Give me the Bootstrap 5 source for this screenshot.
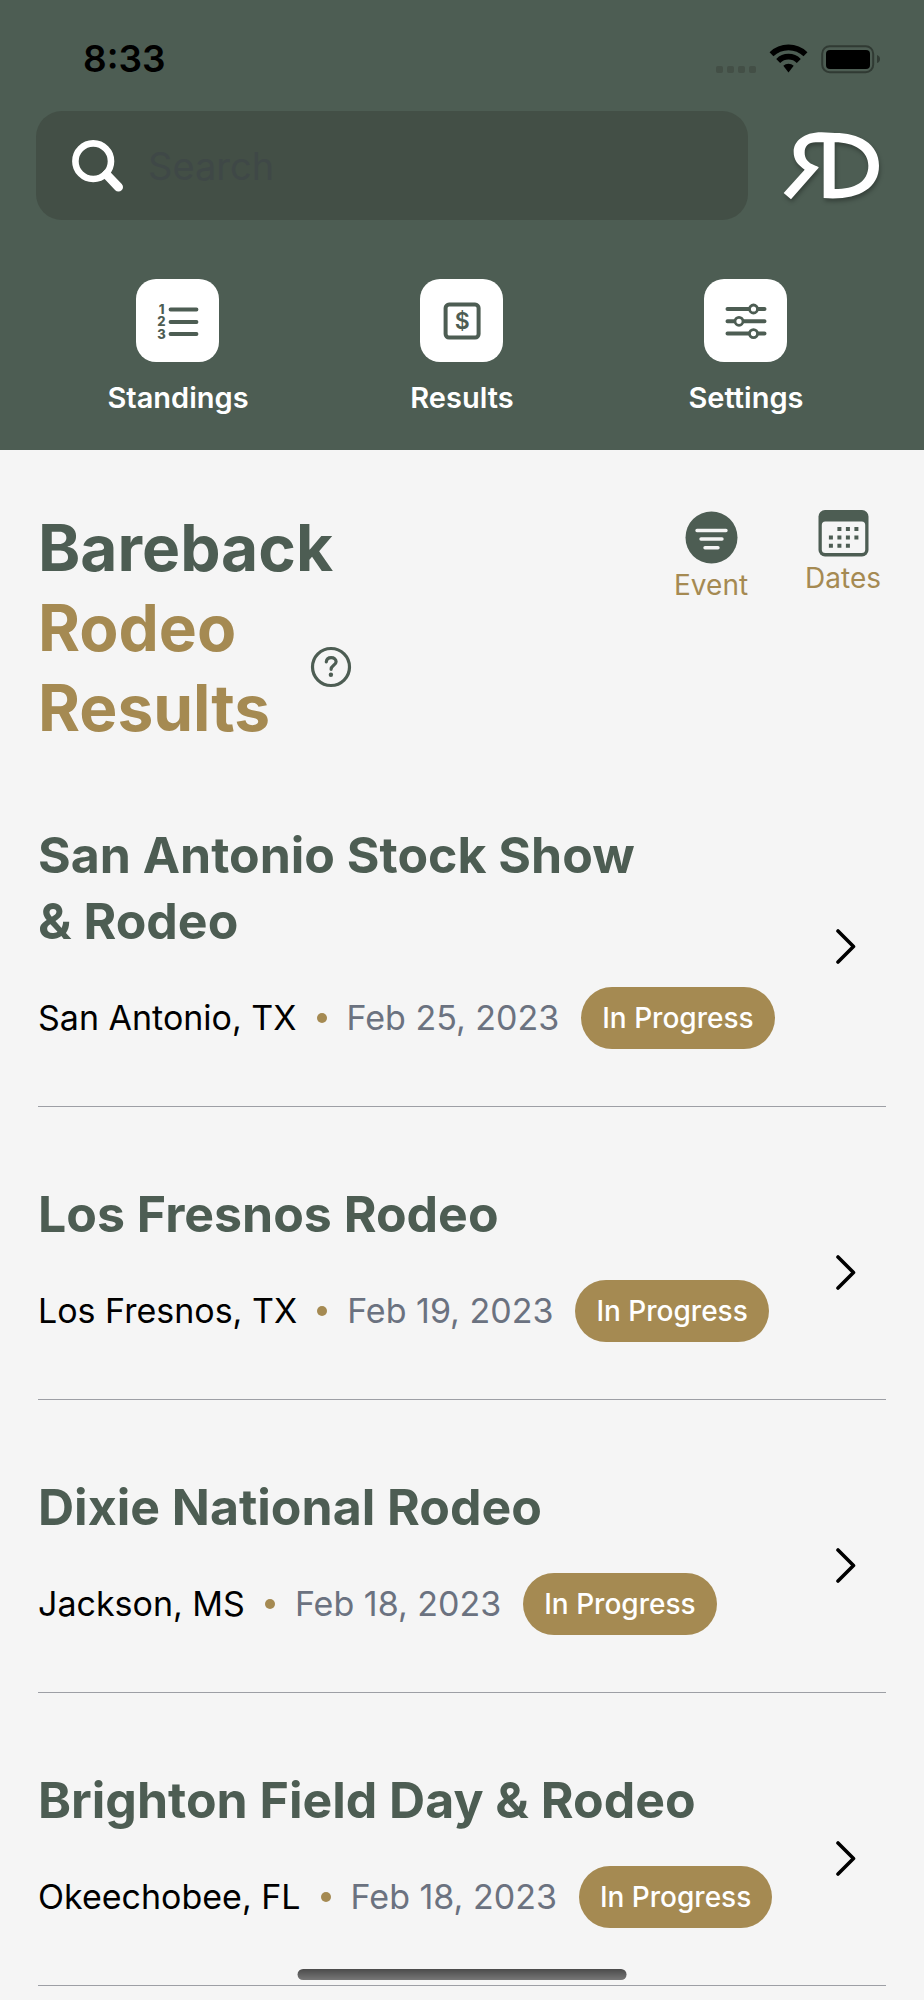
<!DOCTYPE html>
<html lang="en">
<head>
<meta charset="utf-8">
<meta name="viewport" content="width=device-width, initial-scale=1">
<title>Rodeo Results</title>
<link href="https://cdn.jsdelivr.net/npm/bootstrap@5.3.0/dist/css/bootstrap.min.css" rel="stylesheet">
<style>
  :root { --sage: #4d5d53; --gold: #a58a52; --slate: #6b7280; --paper: #f5f5f5; }
  body { background: var(--paper); color: #000; font-family: Inter, "Liberation Sans", sans-serif; }
  svg { display: block; flex: none; }
  a, a:hover { text-decoration: none; }

  .app-top { background: var(--sage); padding-bottom: 32px; }
  .status-row { height: 111px; padding: 6px 44px 0 83px; }
  .clock { font-size: 37px; line-height: 44px; font-weight: 600; color: #000; }
  .search-row { padding: 0 43px 0 36px; gap: 32px; }
  .search-field { height: 109px; border-radius: 26px; background: #434f46; padding: 0 36px; gap: 24px; }
  .search-field input { font-size: 38px; line-height: 48px; color: #fff; }
  .search-field input::placeholder { color: #3f4847; opacity: 1; }
  .logo { filter: drop-shadow(1px 3px 2px rgba(0,0,0,.3)); }

  .shortcuts { padding: 59px 36px 0; }
  .shortcut { color: #fff; font-size: 29px; line-height: 40px; font-weight: 600; }
  .tile { width: 83px; height: 83px; border-radius: 20px; background: #fff; }

  .page-head { padding: 58px 43px 0 38px; }
  .page-head h1 { font-size: 64px; line-height: 80px; font-weight: 700; color: var(--sage); }
  .page-head h1 span { color: var(--gold); }
  .title-block { width: 294px; }
  .help-btn { margin: 0 0 60px -22px; }
  .head-tools { gap: 57px; padding-top: 2px; }
  .tool-btn { font-size: 28px; line-height: 40px; color: var(--gold); }

  .results { padding: 0 38px; }
  .result { padding: 74px 0 57px; border-bottom: 1px solid #9d9fa5; color: #000; }
  .result h2 { font-size: 50px; line-height: 66px; font-weight: 700; color: var(--sage); margin-bottom: 33px; }
  .meta { font-size: 34px; line-height: 62px; gap: 20px; }
  .meta time { color: var(--slate); padding-right: 2px; }
  .bullet { width: 10px; height: 10px; border-radius: 50%; background: var(--gold); }
  .status-pill { background: var(--gold); color: #fff; font-size: 28px; font-weight: 500; border-radius: 31px; padding: 0 21px; }
  .chevron { margin: 20px 29px 0 0; }

  .home-bar { bottom: 20px; width: 35.6%; height: 11px; border-radius: 6px; background: linear-gradient(#4b4b4b, #777); }
</style>
</head>
<body>
<header class="app-top">
  <div class="status-row d-flex align-items-center justify-content-between">
    <span class="clock">8:33</span>
    <svg width="164" height="30" viewBox="0 0 164 30" aria-hidden="true">
      <g fill="#434f46"><rect y="22" width="7" height="7" rx="2"/><rect x="11" y="22" width="7" height="7" rx="2"/><rect x="22" y="22" width="7" height="7" rx="2"/><rect x="33" y="22" width="7" height="7" rx="2"/></g>
      <g fill="none" stroke="#000" stroke-width="5.6"><path d="M55.5 10.2a24.5 24.5 0 0 1 34 0"/><path d="M62.2 16.9a14.6 14.6 0 0 1 20.6 0"/></g>
      <path d="M67.3 21.8a7.6 7.6 0 0 1 10.4 0L72.5 28.5Z"/>
      <rect x="106.2" y="2.2" width="51" height="26" rx="7.5" fill="none" stroke="#303a33" stroke-width="2"/>
      <rect x="110" y="6" width="44" height="19" rx="4"/>
      <path d="M161 11v8q3-1 3-4t-3-4Z" fill="#303a33"/>
    </svg>
  </div>

  <div class="search-row d-flex align-items-center">
    <form class="search-field d-flex align-items-center flex-grow-1" role="search">
      <label for="q">
        <svg width="52" height="52" viewBox="0 0 52 52" fill="none" stroke="#fff" stroke-linecap="round"><circle cx="21.2" cy="21.2" r="17.8" stroke-width="6.6"/><path d="M34.5 34.5l12 12.6" stroke-width="9"/></svg>
      </label>
      <input id="q" type="search" aria-label="Search" class="form-control border-0 bg-transparent shadow-none p-0" placeholder="Search">
    </form>
    <a href="#" aria-label="Home" class="logo"><svg width="101" height="72" viewBox="955 390 303 216"><path fill="#fff" fill-rule="evenodd" d="M1120 399L1080 397C1025 397 996 425 996 455C996 480 1008 493 1029 509L966 579L988 598L1071 503C1071 499 1060 498 1052 493C1038 485 1029 475 1029 458C1029 438 1040 427 1062 427H1086V594C1180 602 1252 570 1252 497C1252 430 1190 399 1120 399ZM1119 427V567C1180 567 1220 545 1220 497C1220 455 1180 427 1119 427Z"/></svg></a>
  </div>

  <nav class="shortcuts">
    <div class="row g-0">
      <div class="col-4 text-center">
        <a href="#" class="shortcut d-inline-flex flex-column align-items-center gap-3">
          <span class="tile d-flex align-items-center justify-content-center"><svg width="42" height="38" viewBox="0 0 42 38"><g stroke="#4d5d53" stroke-width="3.8" stroke-linecap="round"><path d="M13.5 7.5H39.5M13.5 20H39.5M13.5 32H39.5"/></g><g fill="#4d5d53" font-family="Inter" font-weight="800" font-size="13" text-anchor="middle"><text x="4.5" y="11.5">1</text><text x="4.5" y="24">2</text><text x="4.5" y="36.5">3</text></g></svg></span>
          Standings
        </a>
      </div>
      <div class="col-4 text-center">
        <a href="#" class="shortcut d-inline-flex flex-column align-items-center gap-3">
          <span class="tile d-flex align-items-center justify-content-center"><svg width="38" height="38" viewBox="0 0 38 38"><rect x="2.6" y="2.6" width="33" height="33" rx="3.5" fill="none" stroke="#4d5d53" stroke-width="4"/><text x="19.2" y="27" text-anchor="middle" fill="#4d5d53" font-family="Inter" font-size="23" font-weight="600">$</text></svg></span>
          Results
        </a>
      </div>
      <div class="col-4 text-center">
        <a href="#" class="shortcut d-inline-flex flex-column align-items-center gap-3">
          <span class="tile d-flex align-items-center justify-content-center"><svg width="42" height="38" viewBox="0 0 42 38" stroke="#4d5d53" fill="#fff"><path d="M2.5 7H39.5M2.5 19.3H39.5M2.5 31.6H39.5" stroke-width="4" stroke-linecap="round"/><g stroke-width="2.8"><circle cx="28.5" cy="7" r="4"/><circle cx="14" cy="19.3" r="4"/><circle cx="28.5" cy="31.6" r="4"/></g></svg></span>
          Settings
        </a>
      </div>
    </div>
  </nav>
</header>

<main>
  <section class="page-head d-flex justify-content-between align-items-start">
    <div class="d-flex align-items-end">
      <h1 class="title-block mb-0">Bareback <span>Rodeo Results</span></h1>
      <button type="button" class="help-btn btn p-0 border-0" aria-label="Help"><svg width="42" height="42" viewBox="0 0 42 42" fill="none" stroke="#4d5d53"><circle cx="21" cy="21" r="18.5" stroke-width="3.2"/><path d="M16.3 15.8c.3-3 2.4-4.2 4.9-4.2 2.7 0 4.9 1.5 4.9 4.1 0 3.6-5 3.7-5 7.6" stroke-width="3.2" stroke-linecap="round"/><circle cx="20.9" cy="28.8" r="2.2" fill="#4d5d53" stroke="none"/></svg></button>
    </div>
    <div class="head-tools d-flex align-items-start">
      <button type="button" class="tool-btn btn p-0 border-0 d-flex flex-column align-items-center">
        <svg width="53" height="55" viewBox="0 0 53 55"><circle cx="26.5" cy="27.5" r="26" fill="#4d5d53"/><path d="M12 20.5h29M16 29h21M20 37.7h13" stroke="#f5f5f5" stroke-width="3.4" stroke-linecap="round"/></svg>
        Event
      </button>
      <button type="button" class="tool-btn btn p-0 border-0 d-flex flex-column align-items-center">
        <svg width="51" height="48" viewBox="0 0 51 48"><rect x=".5" width="50" height="46.5" rx="6.5" fill="#4d5d53"/><rect x="3.8" y="11.4" width="43.4" height="31.6" rx="3.5" fill="#f5f5f5"/><g stroke="#4d5d53" stroke-width="4"><path d="M19.4 19h4M27.9 19h4M36.4 19h4M10.9 27.4h4M19.4 27.4h4M27.9 27.4h4M36.4 27.4h4M10.9 35.7h4M19.4 35.7h4M27.9 35.7h4"/></g></svg>
        Dates
      </button>
    </div>
  </section>

  <section class="results">
    <a href="#" class="result d-flex align-items-center justify-content-between">
      <div>
        <h2>San Antonio Stock Show &amp;&nbsp;Rodeo</h2>
        <div class="meta d-flex align-items-center"><span>San Antonio, TX</span><span class="bullet"></span><time datetime="2023-02-25">Feb 25, 2023</time><span class="status-pill">In Progress</span></div>
      </div>
      <svg class="chevron" width="24" height="36" viewBox="0 0 24 36" fill="none" stroke="#000" stroke-width="3.6" stroke-linecap="round" stroke-linejoin="round"><path d="M5 3L20.5 18.5L5 34"/></svg>
    </a>
    <a href="#" class="result d-flex align-items-center justify-content-between">
      <div>
        <h2>Los Fresnos Rodeo</h2>
        <div class="meta d-flex align-items-center"><span>Los Fresnos, TX</span><span class="bullet"></span><time datetime="2023-02-19">Feb 19, 2023</time><span class="status-pill">In Progress</span></div>
      </div>
      <svg class="chevron" width="24" height="36" viewBox="0 0 24 36" fill="none" stroke="#000" stroke-width="3.6" stroke-linecap="round" stroke-linejoin="round"><path d="M5 3L20.5 18.5L5 34"/></svg>
    </a>
    <a href="#" class="result d-flex align-items-center justify-content-between">
      <div>
        <h2>Dixie National Rodeo</h2>
        <div class="meta d-flex align-items-center"><span>Jackson, MS</span><span class="bullet"></span><time datetime="2023-02-18">Feb 18, 2023</time><span class="status-pill">In Progress</span></div>
      </div>
      <svg class="chevron" width="24" height="36" viewBox="0 0 24 36" fill="none" stroke="#000" stroke-width="3.6" stroke-linecap="round" stroke-linejoin="round"><path d="M5 3L20.5 18.5L5 34"/></svg>
    </a>
    <a href="#" class="result d-flex align-items-center justify-content-between">
      <div>
        <h2>Brighton Field Day &amp; Rodeo</h2>
        <div class="meta d-flex align-items-center"><span>Okeechobee, FL</span><span class="bullet"></span><time datetime="2023-02-18">Feb 18, 2023</time><span class="status-pill">In Progress</span></div>
      </div>
      <svg class="chevron" width="24" height="36" viewBox="0 0 24 36" fill="none" stroke="#000" stroke-width="3.6" stroke-linecap="round" stroke-linejoin="round"><path d="M5 3L20.5 18.5L5 34"/></svg>
    </a>
  </section>
</main>
<div class="home-bar position-fixed start-50 translate-middle-x"></div>
<script src="https://cdn.jsdelivr.net/npm/bootstrap@5.3.0/dist/js/bootstrap.bundle.min.js"></script>
</body>
</html>
